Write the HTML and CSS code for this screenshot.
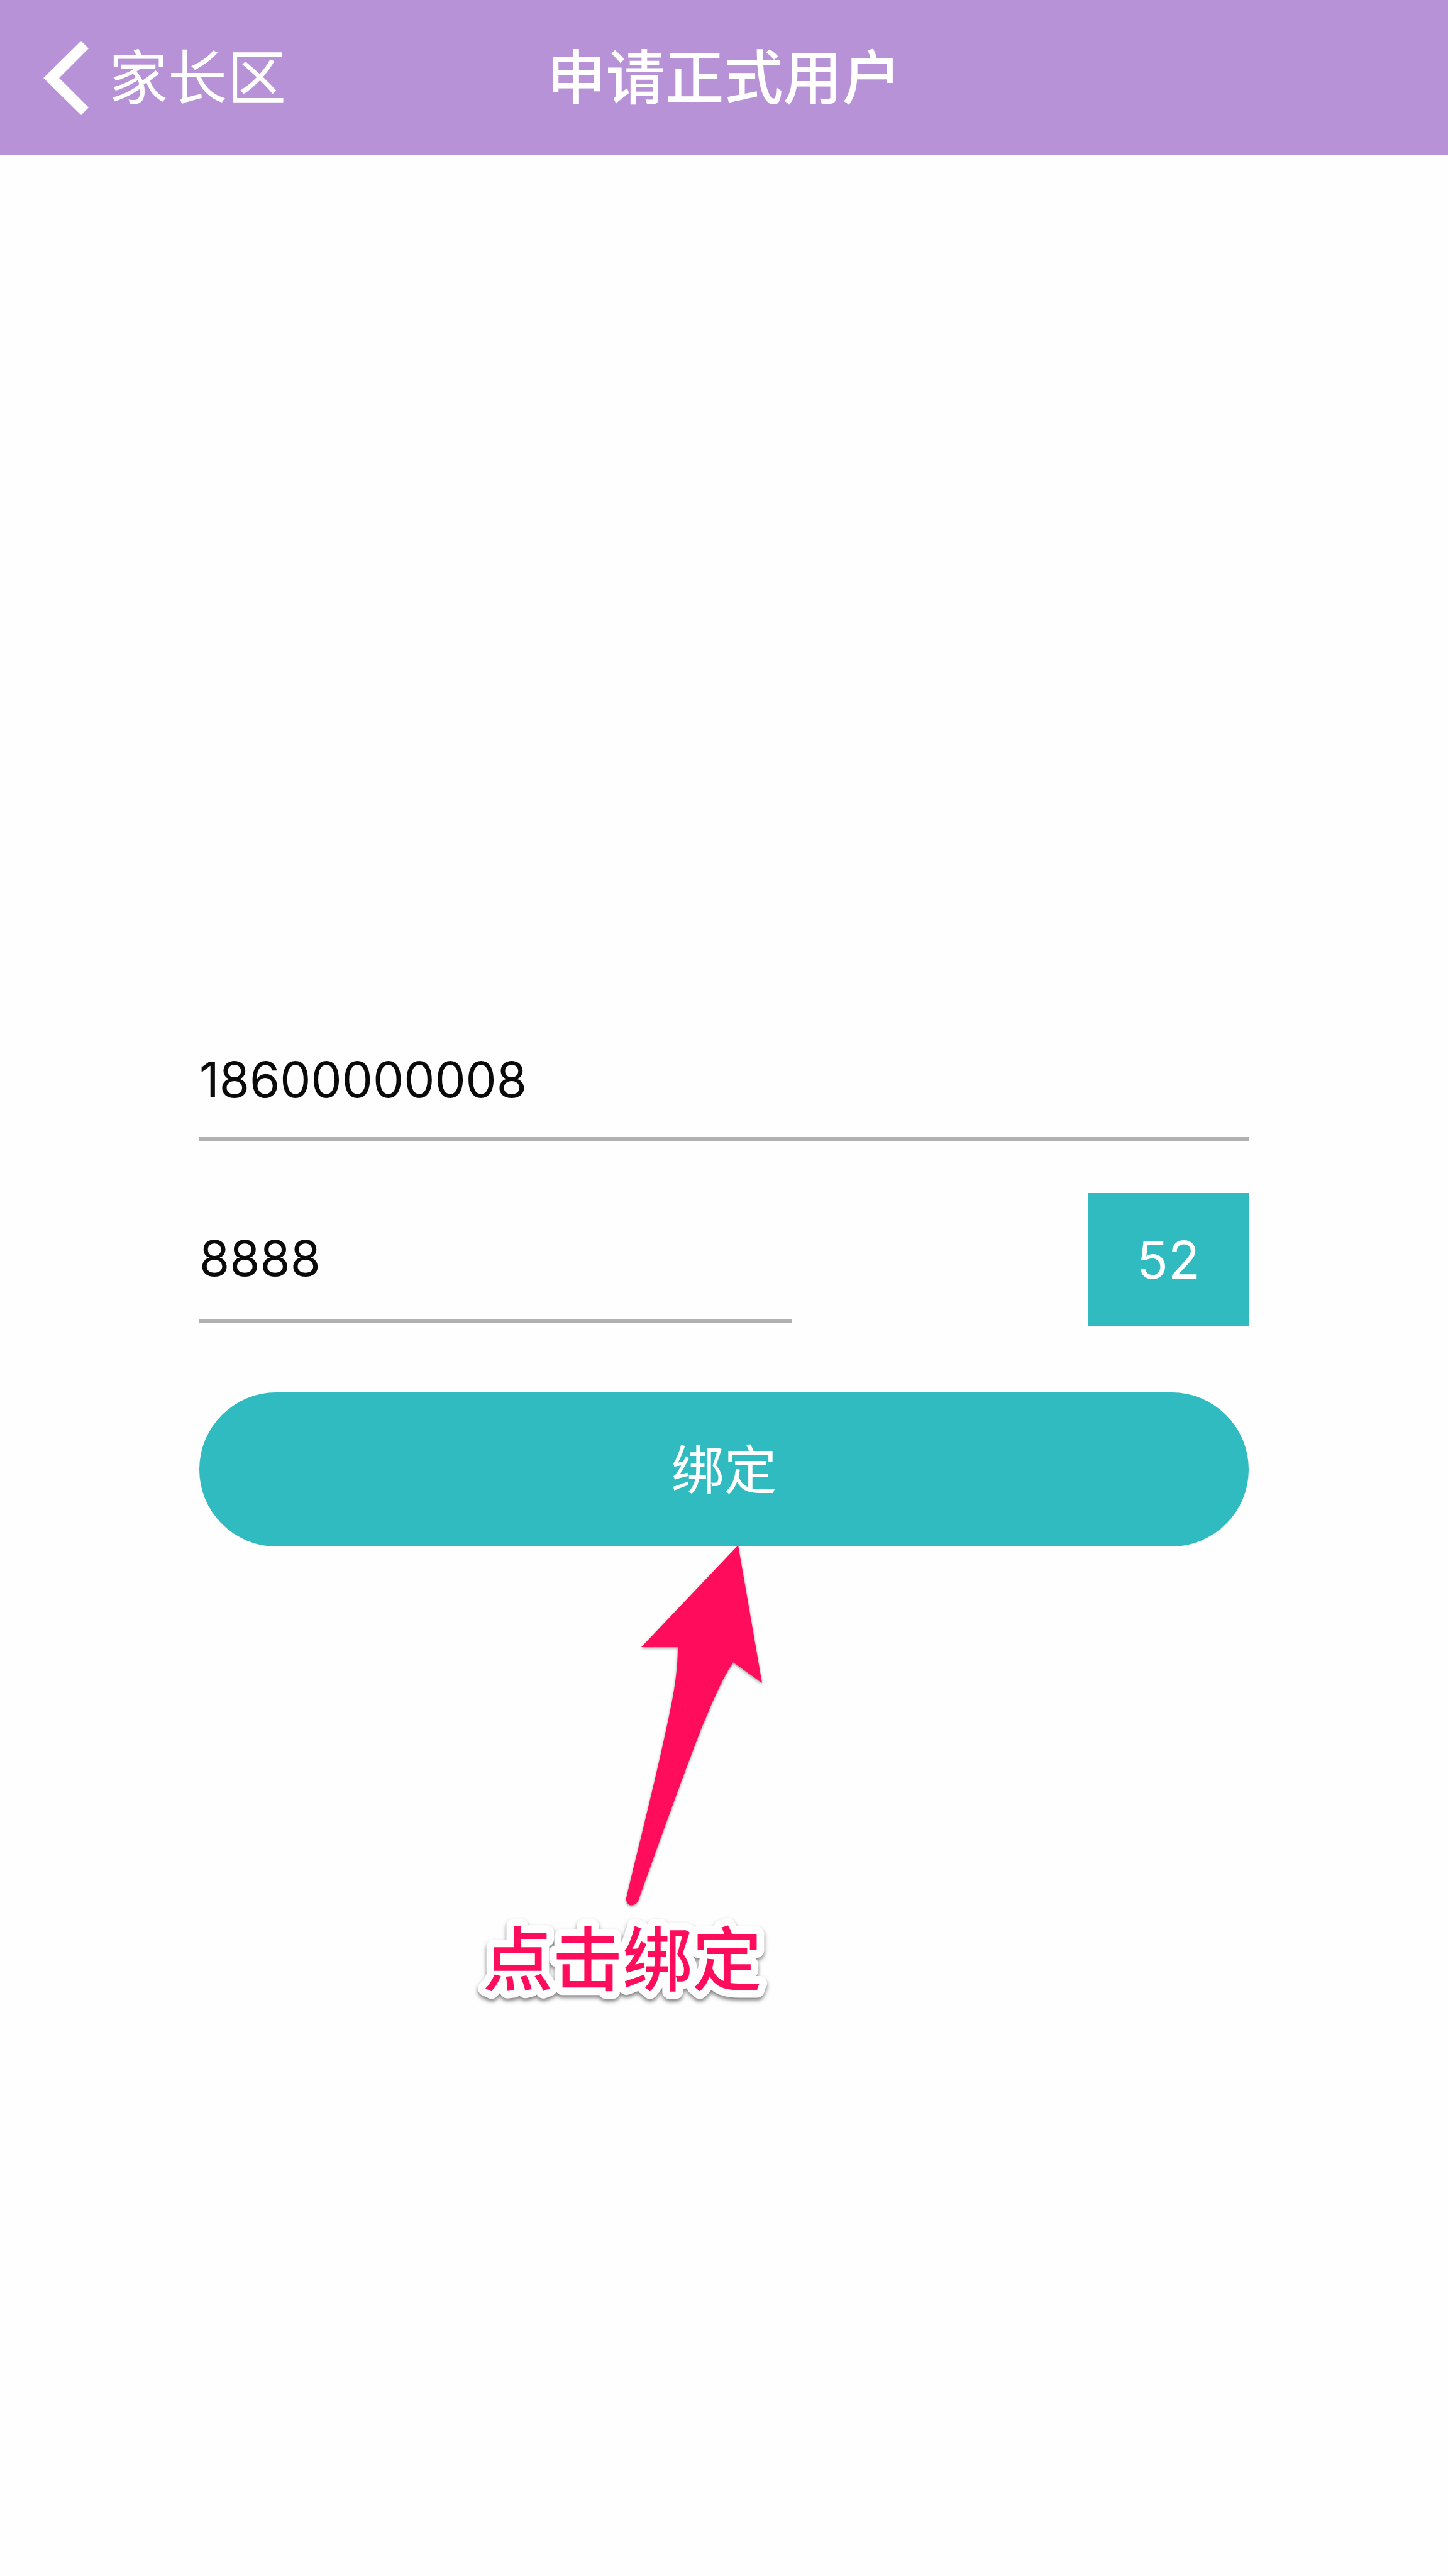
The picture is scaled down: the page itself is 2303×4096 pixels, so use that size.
FILE: index.html
```html
<!DOCTYPE html>
<html lang="zh-CN">
<head>
<meta charset="utf-8">
<meta name="viewport" content="width=device-width, initial-scale=1">
<title>申请正式用户</title>
<link rel="stylesheet" href="styles.css">
</head>
<body>
<header class="navbar">
  <a class="back" href="#">
    <svg class="back-icon" viewBox="0 0 72 120" aria-hidden="true"><path d="M60 1 0 60 60 119 72 107 25 60 72 13Z" fill="#fff"/></svg>
    <span>家长区</span>
  </a>
  <h1 class="title">申请正式用户</h1>
</header>
<main class="content">
  <form class="bind-form">
    <input class="field phone" type="tel" aria-label="手机号" value="18600000008">
    <div class="code-row">
      <input class="field code" type="text" inputmode="numeric" aria-label="验证码" value="8888">
      <button class="countdown" type="button">52</button>
    </div>
    <div class="submit-wrap">
      <button class="submit" type="submit">绑定</button>
      <div class="hint">
        <svg class="hint-arrow" viewBox="0 0 216 574" aria-hidden="true"><path d="M178 0 24 162H82C82 192 78 222 72 252C52 352 24 460 0 561C-1 576 17 577 21 560C52 474 84 383 120 290C136 252 150 217 170 186L216 219Z" fill="#ff0d5c"/></svg>
        <svg class="hint-label" viewBox="0 0 444 144"><text class="hint-text" x="0" y="114">点击绑定</text></svg>
      </div>
    </div>
  </form>
</main>
</body>
</html>
```
FILE: styles.css
```css
* {
  box-sizing: border-box;
}

body {
  margin: 0;
  min-height: 100vh;
  background: #fefefe;
  color: #0a0a0a;
  font-family: Inter, "Noto Sans CJK SC", sans-serif;
}

.navbar {
  display: grid;
  grid-template-columns: 1fr auto 1fr;
  align-items: center;
  height: 247px;
  padding: 0 69px;
  background: #b892d6;
  color: #fff;
}

.back {
  display: flex;
  align-items: center;
  gap: 32px;
  color: inherit;
  font-size: 94px;
  font-weight: 400;
  line-height: 120px;
  text-decoration: none;
}

.back-icon {
  width: 72px;
  height: 120px;
}

.title {
  margin: 0;
  font-size: 94px;
  font-weight: 500;
  line-height: 120px;
}

.content {
  padding: 1377px 317px 0;
}

.bind-form {
  display: flex;
  flex-direction: column;
}

.field {
  padding: 0;
  border: 0;
  border-bottom: 6px solid #b0b0b0;
  border-radius: 0;
  outline: 0;
  background: transparent;
  color: inherit;
  font: 400 78px Inter, "Noto Sans CJK SC", sans-serif;
}

.phone {
  width: 100%;
  height: 190px;
}

.code-row {
  display: grid;
  grid-template-columns: 13fr 10fr;
  align-items: center;
  margin-top: 83px;
}

.code {
  width: 100%;
  height: 202px;
}

.countdown,
.submit {
  padding: 0;
  border: 0;
  background: #30bbc0;
  color: #fff;
  font: 400 84px Inter, "Noto Sans CJK SC", sans-serif;
}

.countdown {
  justify-self: end;
  width: 256px;
  height: 212px;
  font-size: 82px;
}

.submit-wrap {
  position: relative;
  margin-top: 105px;
}

.submit {
  display: block;
  width: 100%;
  height: 245px;
  padding-bottom: 10px;
  border-radius: 123px;
}

/* Callout that lies over the page and points at the submit button */
.hint {
  position: absolute;
  top: 243px;
  left: calc(50% - 384px);
  display: flex;
  flex-direction: column;
  gap: 12px;
  width: 444px;
}

.hint-arrow {
  width: 216px;
  height: 574px;
  margin-left: 228px;
  overflow: visible;
  filter: drop-shadow(0 2px 2px rgba(0, 0, 0, 0.4));
}

.hint-label {
  width: 444px;
  height: 144px;
  overflow: visible;
  filter: drop-shadow(0 4px 3px rgba(0, 0, 0, 0.5));
}

.hint-text {
  fill: #ff0d5c;
  stroke: #fefefe;
  stroke-width: 24px;
  stroke-linejoin: round;
  paint-order: stroke fill;
  font-size: 111px;
  font-weight: 500;
}
```
